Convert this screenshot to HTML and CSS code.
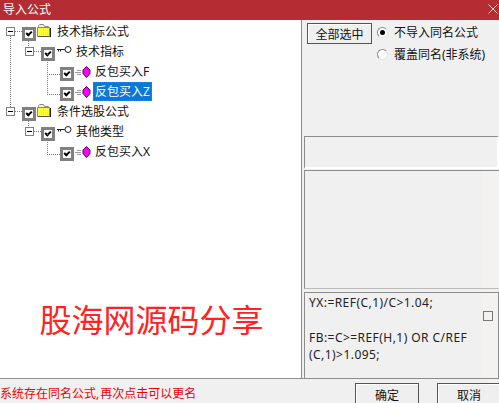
FILE: index.html
```html
<!DOCTYPE html>
<html lang="en">
<head>
    <meta charset="UTF-8">
    <title>导入公式</title>
    <link rel="stylesheet" href="styles.css">
</head>
<body>
    <div class="window">
        <div class="titlebar">
            <span>导入公式</span>
            <svg class="close" width="10" height="10" viewBox="0 0 10 10"><path d="M0.5 0.5L9.5 9.5M9.5 0.5L0.5 9.5" stroke="#fff" stroke-width="0.8" fill="none"/></svg>
        </div>

        <div class="main">
            <div class="tree-pane">
                <div class="row level-0 branch-long">
                    <span class="expander"></span><span class="check"></span>
                    <svg class="folder" width="14" height="13" viewBox="0 0 14 13"><defs><pattern id="dither" width="2" height="2" patternUnits="userSpaceOnUse"><rect width="2" height="2" fill="#ffff33"/><rect width="1" height="1" fill="#e8e85a"/></pattern></defs><path d="M1.5 2.5V1.5L2.5 0.5H6.5L7.5 2.5H11.5V3.5H1.5Z" fill="#eee" stroke="#888"/><path d="M0.5 3.5H12.5V12.5H0.5Z" fill="url(#dither)" stroke="#888"/><path d="M13.5 4V13H1" stroke="#222" fill="none"/></svg>
                    <span class="label">技术指标公式</span>
                </div>
                <div class="row level-1">
                    <span class="expander"></span><span class="check"></span>
                    <svg class="key" width="15" height="8" viewBox="0 0 15 8"><path d="M0 3.5H8M1.5 3V5.5M3.5 3V5.5" stroke="#222" fill="none"/><circle cx="11" cy="3.5" r="3" fill="#fff" stroke="#222"/></svg>
                    <span class="label">技术指标</span>
                </div>
                <div class="row level-2">
                    <span class="check"></span>
                    <svg class="gem" width="16" height="12" viewBox="0 0 16 12"><path d="M2 4.5H6M0 6.5H6M2 8.5H6" stroke="#999"/><path d="M11.5 0.5L15 4V7.5L11.5 11.5L8 7.5V4Z" fill="#f0f" stroke="#505"/></svg>
                    <span class="label">反包买入F</span>
                </div>
                <div class="row level-2">
                    <span class="check"></span>
                    <svg class="gem" width="16" height="12" viewBox="0 0 16 12"><path d="M2 4.5H6M0 6.5H6M2 8.5H6" stroke="#999"/><path d="M11.5 0.5L15 4V7.5L11.5 11.5L8 7.5V4Z" fill="#f0f" stroke="#505"/></svg>
                    <span class="label selected">反包买入Z</span>
                </div>
                <div class="row level-0">
                    <span class="expander"></span><span class="check"></span>
                    <svg class="folder" width="14" height="13" viewBox="0 0 14 13"><path d="M1.5 2.5V1.5L2.5 0.5H6.5L7.5 2.5H11.5V3.5H1.5Z" fill="#eee" stroke="#888"/><path d="M0.5 3.5H12.5V12.5H0.5Z" fill="url(#dither)" stroke="#888"/><path d="M13.5 4V13H1" stroke="#222" fill="none"/></svg>
                    <span class="label">条件选股公式</span>
                </div>
                <div class="row level-1">
                    <span class="expander"></span><span class="check"></span>
                    <svg class="key" width="15" height="8" viewBox="0 0 15 8"><path d="M0 3.5H8M1.5 3V5.5M3.5 3V5.5" stroke="#222" fill="none"/><circle cx="11" cy="3.5" r="3" fill="#fff" stroke="#222"/></svg>
                    <span class="label">其他类型</span>
                </div>
                <div class="row level-2">
                    <span class="check"></span>
                    <svg class="gem" width="16" height="12" viewBox="0 0 16 12"><path d="M2 4.5H6M0 6.5H6M2 8.5H6" stroke="#999"/><path d="M11.5 0.5L15 4V7.5L11.5 11.5L8 7.5V4Z" fill="#f0f" stroke="#505"/></svg>
                    <span class="label">反包买入X</span>
                </div>
                <div class="watermark">股海网源码分享</div>
            </div>

            <div class="side-pane">
                <div class="options">
                    <button class="btn-all">全部选中</button>
                    <div class="radios">
                        <label class="radio"><span class="dot on"></span>不导入同名公式</label>
                        <label class="radio"><span class="dot"></span>覆盖同名(非系统)</label>
                    </div>
                </div>
                <div class="panel panel-small"></div>
                <div class="panel panel-mid"></div>
                <div class="panel panel-code">
                    <p>YX:=REF(C,1)/C&gt;1.04;</p>
                    <p class="gap">FB:=C&gt;=REF(H,1) OR C/REF<br>(C,1)&gt;1.095;</p>
                    <span class="small-box"></span>
                </div>
            </div>
        </div>

        <div class="footer">
            <span class="status">系统存在同名公式, 再次点击可以更名</span>
            <button class="btn-ok">确定</button>
            <button class="btn-cancel">取消</button>
        </div>
    </div>
</body>
</html>
```

FILE: styles.css
```css
body {
    margin: 0;
    font-family: "Noto Sans", "Noto Sans CJK SC", sans-serif;
    font-size: 12px;
    color: #111;
    background-color: #f0f0f0;
}

.window {
    width: 499px;
    height: 403px;
    display: flex;
    flex-direction: column;
    overflow: hidden;
}

.titlebar {
    height: 20px;
    flex: none;
    display: flex;
    align-items: center;
    justify-content: space-between;
    padding: 0 1px 0 3px;
    background-color: #b32d33;
    color: #fff;
    line-height: 16px;
}

.close { flex: none; margin-top: -3px; }

.main {
    flex: 1;
    display: flex;
    min-height: 0;
}

.tree-pane {
    width: 301px;
    flex: none;
    padding-top: 4px;
    background-color: #fff;
    border-right: 1px solid #8c8c8c;
    display: flex;
    flex-direction: column;
}

.row {
    position: relative;
    height: 20px;
    display: flex;
    align-items: center;
    white-space: nowrap;
}

.level-0 { padding-left: 6px; }
.level-1 { padding-left: 25px; }
.level-2 { padding-left: 60px; }

.expander {
    position: relative;
    width: 7px;
    height: 7px;
    margin: -5px 7px 0 0;
    border: 1px solid #808080;
    background: linear-gradient(#000, #000) center / 5px 1px no-repeat #fff;
    flex: none;
}

/* dotted stub from the expander to its checkbox */
.expander::after {
    content: "";
    position: absolute;
    left: 8px;
    top: 3px;
    width: 7px;
    border-top: 1px dotted #777;
}

.check {
    width: 8px;
    height: 8px;
    border: 3px solid #808080;
    margin-right: -1px;
    flex: none;
    background-color: #fff;
    position: relative;
}

.check::after {
    content: "";
    position: absolute;
    left: 1px;
    top: 1px;
    width: 4px;
    height: 2px;
    border-left: 2px solid #000;
    border-bottom: 2px solid #000;
    transform: rotate(-45deg);
}

/* tree connectors */
.level-1::before,
.level-2::before {
    content: "";
    position: absolute;
    border-left: 1px dotted #777;
}

.level-1::before {
    left: 28px;
    top: -3px;
    height: 7px;
}

.level-2::before {
    left: 47px;
    top: -10px;
    width: 12px;
    height: 20px;
    border-bottom: 1px dotted #777;
}

.branch-long::after {
    content: "";
    position: absolute;
    left: 10px;
    top: 12px;
    height: 71px;
    border-left: 1px dotted #777;
}

.folder { margin: -8px 0 0 2px; flex: none; }
.folder + .label { margin-left: 6px; }
.key { margin: -8px 0 0 3px; flex: none; }
.key + .label { margin-left: 4px; }
.gem { margin: -4px 0 0 2px; flex: none; }
.gem + .label { margin-left: 4px; }

.label {
    line-height: 18px;
    margin-top: -5px;
}

.selected {
    line-height: 19px;
    padding: 0 2px;
    margin-left: 2px !important;
    background-color: #0a78d7;
    color: #fff;
    outline: 1px dotted #b5651d;
    outline-offset: -1px;
}

.watermark {
    margin-top: auto;
    margin-bottom: 36px;
    text-align: center;
    padding-left: 2px;
    font-size: 32px;
    line-height: 44px;
    color: #f22;
}

.side-pane {
    flex: 1;
    display: flex;
    flex-direction: column;
    padding-left: 2px;
    min-width: 0;
}

.options {
    height: 116px;
    flex: none;
    display: flex;
    align-items: flex-start;
    padding: 3px 0 0 3px;
    box-sizing: border-box;
}

button {
    font-family: inherit;
    font-size: 12px;
    color: #111;
    padding: 0;
    background-color: #efefef;
    border: 1px solid #555;
    box-shadow: inset 1px 1px 0 #fff;
}

.btn-all {
    width: 65px;
    height: 21px;
}

.radios {
    margin-left: 5px;
    display: flex;
    flex-direction: column;
    gap: 4px;
}

.radio {
    height: 18px;
    display: flex;
    align-items: center;
    gap: 6px;
}

.dot {
    width: 11px;
    height: 11px;
    border-radius: 50%;
    box-sizing: border-box;
    border: 1px solid;
    border-color: #8a8a8a #e4e4e4 #e4e4e4 #8a8a8a;
    background-color: #fff;
    position: relative;
}

.dot.on::after {
    content: "";
    position: absolute;
    left: 2px;
    top: 2px;
    width: 5px;
    height: 5px;
    border-radius: 50%;
    background-color: #000;
}

.panel {
    border-top: 1px solid #8c8c8c;
    border-left: 1px solid #8c8c8c;
    box-sizing: border-box;
    flex: none;
}

.panel-small {
    height: 33px;
    margin-bottom: 1px;
    border-right: 2px solid #fff;
    border-bottom: 2px solid #fff;
}

.panel-mid {
    height: 119px;
    margin-bottom: 3px;
    background: linear-gradient(#f4f2f0, #f4f2f0) right top / 17px 100% no-repeat #f0f0f0;
    border-bottom: 1px solid #bbb;
}

.panel-code {
    position: relative;
    flex: 1;
    padding: 1px 20px 0 4px;
    border-right: 1px solid #8c8c8c;
    line-height: 17.5px;
    letter-spacing: 0.45px;
    color: #222;
    background: linear-gradient(#f4f2f0, #f4f2f0) right top / 17px 100% no-repeat #f0f0f0;
}

.panel-code p { margin: 0; }
.panel-code .gap { margin-top: 17px; }

.small-box {
    position: absolute;
    right: 5px;
    top: 18px;
    width: 8px;
    height: 8px;
    border: 1px solid #777;
}

.footer {
    height: 25px;
    flex: none;
    display: flex;
    align-items: flex-start;
    padding-top: 4px;
    box-sizing: border-box;
    border-top: 1px solid #8c8c8c;
}

.status {
    width: 355px;
    flex: none;
    color: #e00;
    line-height: 16px;
    padding-top: 3px;
    word-spacing: -2px;
}

.btn-ok,
.btn-cancel {
    width: 64px;
    height: 24px;
    flex: none;
}

.btn-ok { margin-right: 18px; }
```
